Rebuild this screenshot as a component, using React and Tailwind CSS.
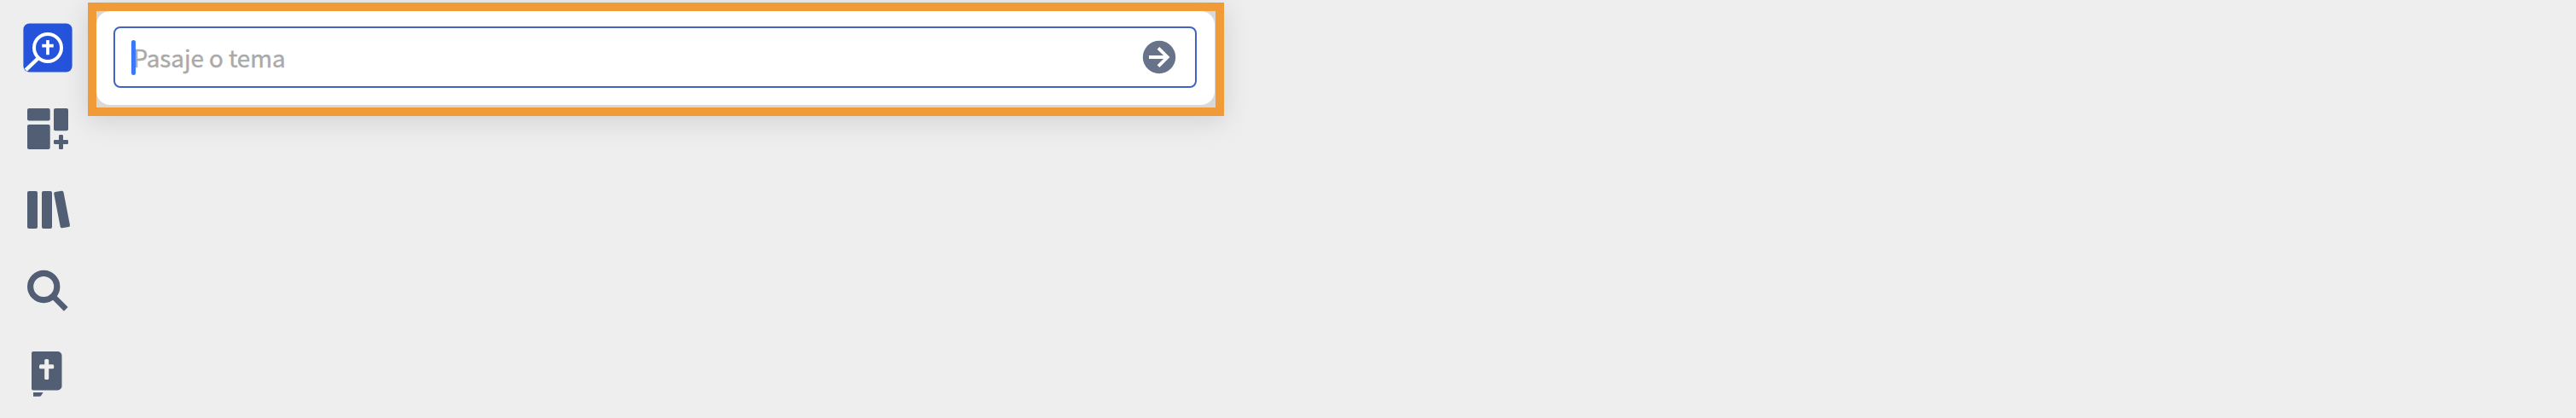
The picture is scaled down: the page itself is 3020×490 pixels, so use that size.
function LogoIcon() {
  return (
    <svg viewBox="0 0 60 60" className="size-[60px]" fill="none">
      <rect x="1.4" y="1.4" width="57.2" height="57.2" rx="7" fill="#2553dc" />
      <path d="M4.2 56.2 18.5 42.5" stroke="#fff" strokeWidth="4.4" />
      <circle cx="30" cy="30" r="16" stroke="#fff" strokeWidth="4" />
      <path d="M30 21v17.3M23.3 27.7h13.4" stroke="#fff" strokeWidth="3.7" />
    </svg>
  )
}

function LayoutsIcon() {
  return (
    <svg viewBox="0 0 60 60" className="size-[60px]" fill="currentColor">
      <rect x="6" y="6" width="26.7" height="14.5" rx="2" />
      <rect x="37" y="6" width="17" height="26.3" rx="2" />
      <rect x="6" y="25" width="26.7" height="29" rx="2" />
      <rect x="43" y="37" width="5" height="17" rx="1.2" />
      <rect x="37" y="43" width="17" height="5" rx="1.2" />
    </svg>
  )
}

function LibraryIcon() {
  return (
    <svg viewBox="0 0 60 60" className="size-[60px]" fill="currentColor">
      <rect x="6" y="8" width="12" height="44" rx="2" />
      <rect x="23" y="8" width="12" height="44" rx="2" />
      <rect x="40.9" y="8" width="11.4" height="43" rx="2" transform="rotate(-11 46.6 29.5)" />
    </svg>
  )
}

function SearchIcon() {
  return (
    <svg viewBox="0 0 60 60" className="size-[60px]" fill="none" stroke="currentColor">
      <circle cx="25.2" cy="25" r="15.6" strokeWidth="7.2" />
      <path d="M36 36 51.3 51.3" strokeWidth="6.6" />
    </svg>
  )
}

function BibleIcon() {
  return (
    <svg viewBox="0 0 60 60" className="size-[60px]" fill="currentColor">
      <path d="M13 6h28.5a5 5 0 0 1 5 5v35.5a5 5 0 0 1-5 5H13a2 2 0 0 1-2-2V8a2 2 0 0 1 2-2Z" />
      <path d="M13 54h11.6l-2.2 3.5q-.8 1.2-2 1.2H13Z" />
      <rect x="26.2" y="15" width="5" height="24" rx="1.5" fill="#eeeeee" />
      <rect x="20" y="21.3" width="17.2" height="5" rx="1.5" fill="#eeeeee" />
    </svg>
  )
}

const NAV_ITEMS = [
  { id: 'home', Icon: LogoIcon },
  { id: 'layouts', Icon: LayoutsIcon },
  { id: 'library', Icon: LibraryIcon },
  { id: 'search', Icon: SearchIcon },
  { id: 'bible', Icon: BibleIcon },
]

export default function App() {
  return (
    <div className="flex h-[490px] w-[3020px] items-start overflow-hidden bg-[#eeeeee] font-['Noto_Sans_CJK_SC',sans-serif]">
      <nav className="flex w-[103px] flex-col gap-[35px] pt-[26px] pl-[26px] text-[#525e73]">
        {NAV_ITEMS.map(({ id, Icon }) => (
          <button key={id} className="size-[60px]">
            <Icon />
          </button>
        ))}
      </nav>

      <div className="mt-[3px] h-[133px] w-[1332px] border-[10px] border-[#f09a38] bg-[#d9d9d9] shadow-[0_6px_30px_rgba(0,0,0,0.12)]">
        <div className="h-[110px] w-[1311px] rounded-[16px] bg-white px-5 pt-[18px]">
          <div className="flex h-[72px] w-[1270px] items-center rounded-[8px] border-2 border-[#4263c5] pr-[22px] pl-[18.5px]">
            <span className="z-10 h-[41px] w-[5px] rounded-full bg-[#3b78f5]" />
            <span className="-ml-[3px] flex-1 text-[28px] leading-[40px] tracking-[-0.15px] text-[#aaaaaa] [-webkit-text-stroke:0.4px_#aaaaaa]">
              Pasaje o tema
            </span>
            <button className="size-10">
              <svg viewBox="0 0 40 40" className="size-10" fill="none">
                <circle cx="20" cy="20" r="19.2" fill="#677389" />
                <path d="M8 20h21M19 9.3 29.7 20 19 30.7" stroke="#fff" strokeWidth="3.8" />
              </svg>
            </button>
          </div>
        </div>
      </div>
    </div>
  )
}
